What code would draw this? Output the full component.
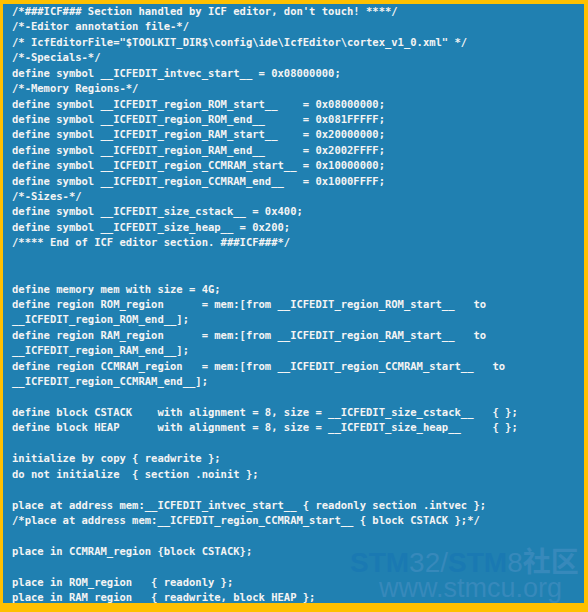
const lines: string[] = [
  "/*###ICF### Section handled by ICF editor, don't touch! ****/",
  "/*-Editor annotation file-*/",
  '/* IcfEditorFile="$TOOLKIT_DIR$\\config\\ide\\IcfEditor\\cortex_v1_0.xml" */',
  "/*-Specials-*/",
  "define symbol __ICFEDIT_intvec_start__ = 0x08000000;",
  "/*-Memory Regions-*/",
  "define symbol __ICFEDIT_region_ROM_start__    = 0x08000000;",
  "define symbol __ICFEDIT_region_ROM_end__      = 0x081FFFFF;",
  "define symbol __ICFEDIT_region_RAM_start__    = 0x20000000;",
  "define symbol __ICFEDIT_region_RAM_end__      = 0x2002FFFF;",
  "define symbol __ICFEDIT_region_CCMRAM_start__ = 0x10000000;",
  "define symbol __ICFEDIT_region_CCMRAM_end__   = 0x1000FFFF;",
  "/*-Sizes-*/",
  "define symbol __ICFEDIT_size_cstack__ = 0x400;",
  "define symbol __ICFEDIT_size_heap__ = 0x200;",
  "/**** End of ICF editor section. ###ICF###*/",
  "",
  "",
  "define memory mem with size = 4G;",
  "define region ROM_region      = mem:[from __ICFEDIT_region_ROM_start__   to",
  "__ICFEDIT_region_ROM_end__];",
  "define region RAM_region      = mem:[from __ICFEDIT_region_RAM_start__   to",
  "__ICFEDIT_region_RAM_end__];",
  "define region CCMRAM_region   = mem:[from __ICFEDIT_region_CCMRAM_start__   to",
  "__ICFEDIT_region_CCMRAM_end__];",
  "",
  "define block CSTACK    with alignment = 8, size = __ICFEDIT_size_cstack__   { };",
  "define block HEAP      with alignment = 8, size = __ICFEDIT_size_heap__     { };",
  "",
  "initialize by copy { readwrite };",
  "do not initialize  { section .noinit };",
  "",
  "place at address mem:__ICFEDIT_intvec_start__ { readonly section .intvec };",
  "/*place at address mem:__ICFEDIT_region_CCMRAM_start__ { block CSTACK };*/",
  "",
  "place in CCMRAM_region {block CSTACK};",
  "",
  "place in ROM_region   { readonly };",
  "place in RAM_region   { readwrite, block HEAP };",
]

const App = () => {
  return (
    <div className="w-[588px] h-[612px] bg-[#ffc000] pl-[3px] pr-[4px] pt-[4px] pb-[9px] overflow-hidden">
      <div className="relative h-full bg-[#2080b1] pl-[9px] overflow-hidden">
        {lines.map((line, i) => (
          <div
            key={i}
            className="w-fit whitespace-pre h-[15.43px] leading-[15.43px] text-[10.5px] font-bold text-[#f4f4f4] font-['DejaVu_Sans_Mono',monospace]"
          >
            {line}
          </div>
        ))}

        {/* watermark */}
        <div className="absolute left-[347px] top-[546px] font-['Liberation_Sans','Noto_Sans_CJK_SC',sans-serif] pointer-events-none">
          <div className="text-[28px] leading-[26px] whitespace-pre">
            <span className="font-bold text-[#1a79b2]">STM</span>
            <span className="text-[#3789bb]">32/</span>
            <span className="font-bold text-[#1a79b2]">STM</span>
            <span className="text-[#3789bb]">8</span>
            <span className="font-bold text-[#3789bb]">社区</span>
          </div>
          <div className="text-[27px] leading-[24px] text-[#3789bb] pl-[29px]">www.stmcu.org</div>
        </div>
      </div>
    </div>
  )
}

export default App
